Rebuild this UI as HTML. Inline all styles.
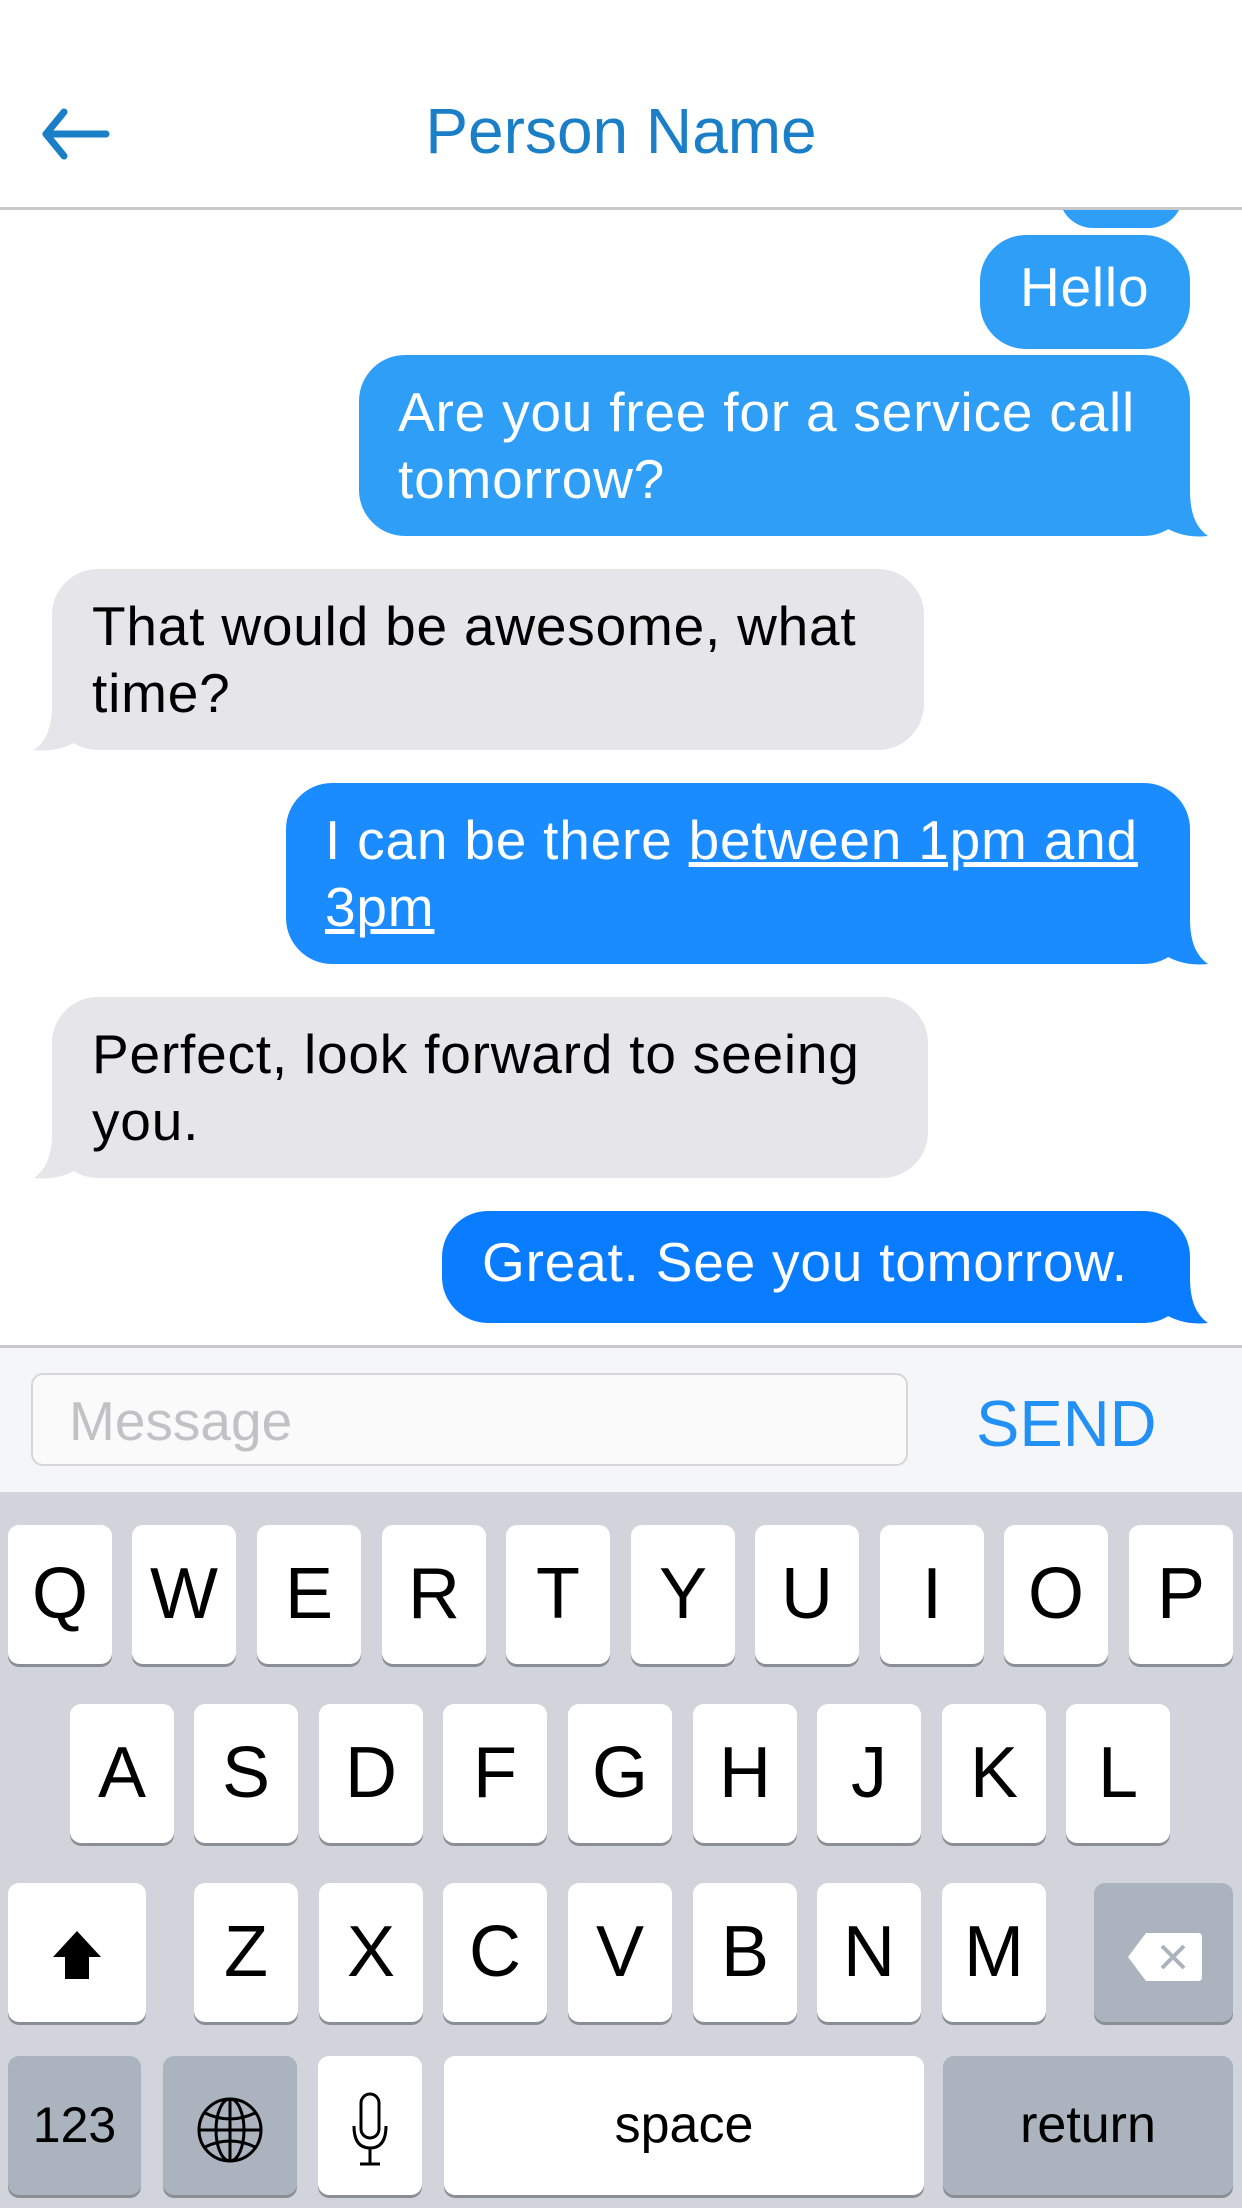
<!DOCTYPE html>
<html><head><meta charset="utf-8">
<style>
*{margin:0;padding:0;box-sizing:border-box}
body{width:1242px;height:2208px;background:#fff;position:relative;overflow:hidden;font-family:"Liberation Sans",Arial,sans-serif}
.abs{position:absolute}
.title{left:0;width:1242px;top:94px;text-align:center;color:#1a7fc7;font-size:64px;letter-spacing:0px}
.hdrline{left:0;top:207px;width:1242px;height:3px;background:#c8c8c8}
.b{position:absolute;border-radius:46px;font-size:55px;letter-spacing:0.8px;line-height:67px;white-space:nowrap;padding:24px 0 0 0}
.blue{color:#fff}
.gray{background:#e5e5ea;color:#000}
.tail{position:absolute}
.bar{left:0;top:1345px;width:1242px;height:147px;background:#f5f6f7;border-top:3px solid #c9c9cb}
.input{left:31px;top:1373px;width:877px;height:93px;border:2px solid #d6d6d8;border-radius:12px;background:#fafafa;color:#c2c2c4;font-size:55px;padding:14px 0 0 36px}
.send{left:976px;top:1386px;color:#2390f5;font-size:65px}
.kb{left:0;top:1492px;width:1242px;height:716px;background:#d1d5db}
.k{position:absolute;width:104px;height:139px;background:#fff;border-radius:11px;box-shadow:0 3px 0 #8a8f96;text-align:center;font-size:72px;line-height:139px;color:#000}
.d{background:#abb3be}
</style></head><body>
<div class="b" style="left:1059px;top:160px;width:124px;height:68px;background:#2f9ef7"></div>
<div class="abs hdrline"></div>
<div class="abs" style="left:0;top:0;width:1242px;height:207px;background:#fff"></div>
<div class="abs title">Person Name</div>
<svg class="abs" style="left:40px;top:106px" width="70" height="56" viewBox="0 0 70 56"><path d="M66 28H8M24 6L6 28L24 50" stroke="#1a7fc7" stroke-width="7" fill="none" stroke-linecap="round" stroke-linejoin="round"/></svg>

<div class="b blue" style="left:980px;top:235px;width:210px;height:114px;background:#2f9ef7;padding:19px 0 0 40px">Hello</div>

<svg class="tail" style="left:1150px;top:490px" width="60" height="50"><path d="M0 0H40C40 20 44 36 58 46C40 48 24 44 10 34Z" fill="#2f9ef7"/></svg>
<div class="b blue" style="left:359px;top:355px;width:831px;height:181px;background:#2f9ef7;padding-left:39px">Are you free for a service call<br>tomorrow?</div>

<svg class="tail" style="left:32px;top:704px" width="60" height="50"><path d="M60 0H20C20 20 16 36 2 46C20 48 36 44 50 34Z" fill="#e5e5ea"/></svg>
<div class="b gray" style="left:52px;top:569px;width:872px;height:181px;padding-left:40px">That would be awesome, what<br>time?</div>

<svg class="tail" style="left:1150px;top:918px" width="60" height="50"><path d="M0 0H40C40 20 44 36 58 46C40 48 24 44 10 34Z" fill="#1a8cff"/></svg>
<div class="b blue" style="left:286px;top:783px;width:904px;height:181px;background:#1a8cff;padding-left:39px">I can be there <u>between 1pm and</u><br><u>3pm</u></div>

<svg class="tail" style="left:32px;top:1132px" width="60" height="50"><path d="M60 0H20C20 20 16 36 2 46C20 48 36 44 50 34Z" fill="#e5e5ea"/></svg>
<div class="b gray" style="left:52px;top:997px;width:876px;height:181px;padding-left:40px">Perfect, look forward to seeing<br>you.</div>

<svg class="tail" style="left:1150px;top:1277px" width="60" height="50"><path d="M0 0H40C40 20 44 36 58 46C40 48 24 44 10 34Z" fill="#0a7cff"/></svg>
<div class="b blue" style="left:442px;top:1211px;width:748px;height:112px;background:#0a7cff;padding:18px 0 0 40px">Great. See you tomorrow.</div>

<div class="abs bar"></div>
<div class="abs input">Message</div>
<div class="abs send">SEND</div>

<div class="abs kb">
<div class="k" style="left:8px;top:33px">Q</div><div class="k" style="left:132px;top:33px">W</div><div class="k" style="left:257px;top:33px">E</div><div class="k" style="left:382px;top:33px">R</div><div class="k" style="left:506px;top:33px">T</div><div class="k" style="left:631px;top:33px">Y</div><div class="k" style="left:755px;top:33px">U</div><div class="k" style="left:880px;top:33px">I</div><div class="k" style="left:1004px;top:33px">O</div><div class="k" style="left:1129px;top:33px">P</div>
<div class="k" style="left:70px;top:212px">A</div><div class="k" style="left:194px;top:212px">S</div><div class="k" style="left:319px;top:212px">D</div><div class="k" style="left:443px;top:212px">F</div><div class="k" style="left:568px;top:212px">G</div><div class="k" style="left:693px;top:212px">H</div><div class="k" style="left:817px;top:212px">J</div><div class="k" style="left:942px;top:212px">K</div><div class="k" style="left:1066px;top:212px">L</div>
<div class="k" style="left:8px;top:391px;width:138px"><svg width="60" height="60" viewBox="0 0 60 60" style="vertical-align:middle"><path d="M30 4L54 30H42V52H18V30H6Z" fill="#000"/></svg></div>
<div class="k" style="left:194px;top:391px">Z</div><div class="k" style="left:319px;top:391px">X</div><div class="k" style="left:443px;top:391px">C</div><div class="k" style="left:568px;top:391px">V</div><div class="k" style="left:693px;top:391px">B</div><div class="k" style="left:817px;top:391px">N</div><div class="k" style="left:942px;top:391px">M</div>
<div class="k d" style="left:1094px;top:391px;width:139px"><svg width="80" height="56" viewBox="0 0 80 56" style="vertical-align:middle"><path d="M4 28L22 4H74Q78 4 78 8V48Q78 52 74 52H22Z" fill="#fff"/><path d="M38 17L60 39M60 17L38 39" stroke="#abb3be" stroke-width="4"/></svg></div>
<div class="k d" style="left:8px;top:564px;width:133px;font-size:50px">123</div>
<div class="k d" style="left:163px;top:564px;width:134px"><svg width="70" height="70" viewBox="0 0 70 70" style="vertical-align:middle" fill="none" stroke="#000" stroke-width="3"><circle cx="35" cy="35" r="31"/><ellipse cx="35" cy="35" rx="14" ry="31"/><path d="M35 4V66M4 35H66M10 18Q35 30 60 18M10 52Q35 40 60 52"/></svg></div>
<div class="k" style="left:318px;top:564px"><svg width="40" height="76" viewBox="0 0 40 76" style="vertical-align:middle" fill="none" stroke="#000" stroke-width="3"><rect x="11" y="2" width="18" height="44" rx="9"/><path d="M4 34Q4 56 20 56Q36 56 36 34M20 56V72M10 72H30"/></svg></div>
<div class="k" style="left:444px;top:564px;width:480px;font-size:52px">space</div>
<div class="k d" style="left:943px;top:564px;width:290px;font-size:52px">return</div>
</div>
</body></html>
